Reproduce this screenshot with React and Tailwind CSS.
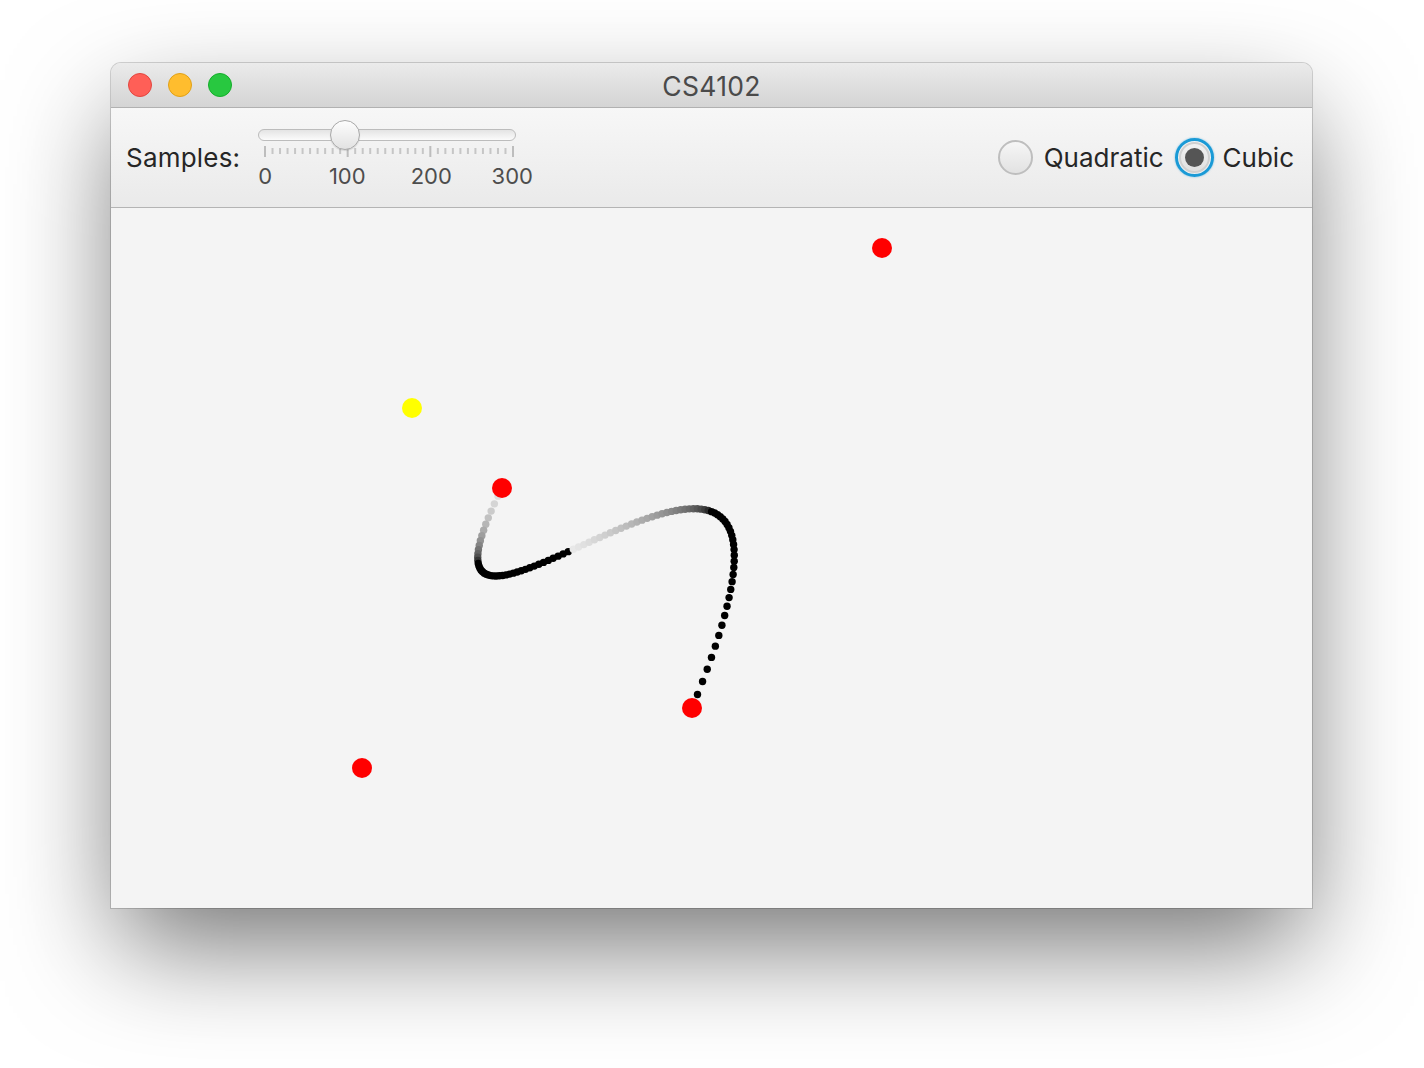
import React from "react";

const P0 = [502, 488];
const P1 = [362, 768];
const P2 = [882, 248];
const P3 = [692, 708];

function bez(t) {
  const u = 1 - t;
  const a = u * u * u, b = 3 * u * u * t, c = 3 * u * t * t, d = t * t * t;
  return [
    a * P0[0] + b * P1[0] + c * P2[0] + d * P3[0],
    a * P0[1] + b * P1[1] + c * P2[1] + d * P3[1],
  ];
}

function shade(i) {
  let g = 0;
  if (i <= 14) g = 232 * Math.pow(1 - i / 14, 0.55);
  else if (i >= 42 && i <= 71) g = 232 * Math.pow(1 - (i - 42) / 29, 0.5);
  g = Math.round(g);
  return `rgb(${g},${g},${g})`;
}

const dots = [];
for (let i = 0; i <= 100; i++) {
  const [x, y] = bez(i / 100);
  dots.push({ x, y, c: shade(i) });
}

function Ticks() {
  const ticks = [];
  for (let k = 0; k <= 33; k++) {
    const x = 1 + (k * 248) / 33;
    const major = k % 11 === 0;
    ticks.push(
      <rect
        key={k}
        x={x - 1}
        y={major ? 0 : 2}
        width={2}
        height={major ? 11 : 6}
        fill={major ? "#bdbdbd" : "#c6c6c6"}
      />
    );
  }
  return (
    <svg width="252" height="11" viewBox="0 0 252 11" className="absolute left-[6px] top-[26px]">
      {ticks}
    </svg>
  );
}

export default function App() {
  return (
    <div className="w-[1424px] h-[1068px] bg-white pt-[63px] pl-[111px] font-['Inter',sans-serif] overflow-hidden">
      <div className="w-[1201px] h-[845px] rounded-t-[10px] flex flex-col bg-[#f4f4f4] shadow-[0_0_0_1px_rgba(0,0,0,0.16),0_45px_110px_-8px_rgba(0,0,0,0.55)]">
        {/* Title bar */}
        <div className="relative h-[45px] shrink-0 rounded-t-[10px] bg-gradient-to-b from-[#ebebeb] to-[#d4d4d4] border-b border-[#b1b1b1] flex items-center px-[17px]">
          <div className="flex items-center gap-[16px]">
            <span className="w-[24px] h-[24px] rounded-full bg-[#ff5f57] border border-[#e2463f]" />
            <span className="w-[24px] h-[24px] rounded-full bg-[#ffbd2e] border border-[#e1a116]" />
            <span className="w-[24px] h-[24px] rounded-full bg-[#28c840] border border-[#14ae2a]" />
          </div>
          <div className="absolute inset-0 flex items-center justify-center text-[26.5px] tracking-[0.3px] leading-none text-[#4a4a4a] pt-[2px]">
            CS4102
          </div>
        </div>

        {/* Toolbar */}
        <div className="h-[100px] shrink-0 bg-gradient-to-b from-[#f7f7f7] to-[#eaeaea] border-b border-[#b4b4b4] flex items-center justify-between pl-[15px] pr-[18px]">
          <div className="flex items-center">
            <span className="text-[26px] tracking-[0.2px] leading-none text-[#262626]">Samples:</span>
            <div className="relative ml-[18px] -mt-[5px] w-[258px] h-[70px]">
              <div className="absolute left-0 top-[9px] w-[258px] h-[12px] rounded-full border border-[#bcbcbc] bg-gradient-to-b from-[#e4e4e4] to-[#fbfbfb]" />
              <Ticks />
              <div className="absolute left-[72px] top-0 w-[30px] h-[30px] rounded-full border border-[#a8a8a8] bg-gradient-to-b from-[#fdfdfd] to-[#e2e2e2] shadow-[0_1px_1px_rgba(0,0,0,0.12)]" />
              <span className="absolute left-[7px] top-[45px] -translate-x-1/2 text-[22px] leading-none text-[#4d4d4d]">0</span>
              <span className="absolute left-[89px] top-[45px] -translate-x-1/2 text-[22px] leading-none text-[#4d4d4d]">100</span>
              <span className="absolute left-[173px] top-[45px] -translate-x-1/2 text-[22px] leading-none text-[#4d4d4d]">200</span>
              <span className="absolute left-[254px] top-[45px] -translate-x-1/2 text-[22px] leading-none text-[#4d4d4d]">300</span>
            </div>
          </div>
          <div className="flex items-center">
            <span className="w-[35px] h-[35px] rounded-full border-2 border-[#bebebe] bg-gradient-to-b from-[#f6f6f6] to-[#e2e2e2]" />
            <span className="ml-[11px] text-[26px] leading-none text-[#262626]">Quadratic</span>
            <span className="ml-[11px] w-[39px] h-[39px] rounded-full border-[3px] border-[#1a9ad6] shadow-[0_0_2px_rgba(26,154,214,0.6)] flex items-center justify-center">
              <span className="w-[31px] h-[31px] rounded-full border-2 border-[#d0d0d0] bg-gradient-to-b from-[#f2f2f2] to-[#e0e0e0] flex items-center justify-center">
                <span className="w-[19px] h-[19px] rounded-full bg-[#555555]" />
              </span>
            </span>
            <span className="ml-[9px] text-[26px] leading-none text-[#262626]">Cubic</span>
          </div>
        </div>

        {/* Canvas */}
        <div className="flex-1 bg-[#f4f4f4]">
          <svg width="1201" height="700" viewBox="111 208 1201 700" className="block">
            {dots.map((d, i) => (
              <circle key={i} cx={d.x} cy={d.y} r={3.7} fill={d.c} />
            ))}
            <circle cx={412} cy={408} r={10} fill="#ffff00" />
            <circle cx={882} cy={248} r={10} fill="#ff0000" />
            <circle cx={502} cy={488} r={10} fill="#ff0000" />
            <circle cx={692} cy={708} r={10} fill="#ff0000" />
            <circle cx={362} cy={768} r={10} fill="#ff0000" />
          </svg>
        </div>
      </div>
    </div>
  );
}
